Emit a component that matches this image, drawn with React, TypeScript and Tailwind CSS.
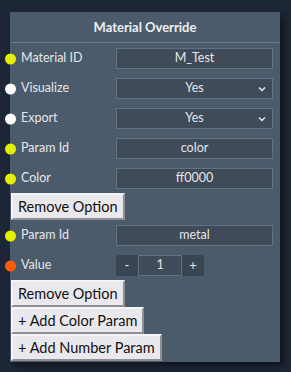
const font = { fontFamily: "Lato, 'Noto Sans', sans-serif" };

function Dot({ color }: { color: string }) {
  return <span className={`absolute left-[-5px] top-1/2 -translate-y-1/2 w-[11px] h-[11px] rounded-full ${color}`} />;
}

function Row({ dot, label, children }: { dot: string; label: string; children: React.ReactNode }) {
  return (
    <div className="relative flex items-center h-[21px] pl-[11px] pr-[7px]">
      <Dot color={dot} />
      <span className="text-[12.5px] text-[#e4e7ea] flex-1">{label}</span>
      {children}
    </div>
  );
}

function TextBox({ value }: { value: string }) {
  return (
    <div className="w-[157px] h-[21px] bg-[#3f4b59] border border-[#627283] flex items-center justify-center text-[12.5px] text-[#e4e7ea]">
      {value}
    </div>
  );
}

function SelectBox({ value }: { value: string }) {
  return (
    <div className="relative w-[157px] h-[21px] bg-[#3f4b59] border border-[#627283] flex items-center justify-center text-[12.5px] text-[#e4e7ea]">
      {value}
      <svg className="absolute right-[6px] top-[7px]" width="8" height="6" viewBox="0 0 8 6">
        <path d="M1 1.5 L4 4.5 L7 1.5" stroke="#e4e7ea" strokeWidth="1.5" fill="none" />
      </svg>
    </div>
  );
}

function Btn({ children }: { children: React.ReactNode }) {
  return (
    <div className="self-start ml-px h-[27px] px-[5px] flex items-center bg-[#e9e8ed] border-2 border-t-[#f4f4f6] border-l-[#f4f4f6] border-b-[#8f8f94] border-r-[#8f8f94] text-[14.5px] text-[#111]">
      {children}
    </div>
  );
}

export default function App() {
  return (
    <div className="w-[291px] h-[372px] bg-[#1d2637] pt-[12px] pl-[10px]" style={font}>
      <div className="w-[270px] h-[350px] bg-[#4c5b6b] shadow-[4px_4px_6px_rgba(0,0,0,0.45)] flex flex-col">
        <div className="h-[31px] pt-px flex items-center justify-center text-[13px] font-bold text-[#eef0f2] border-b border-[#6c7b8b] mx-px">
          Material Override
        </div>
        <div className="flex flex-col pt-[5px]">
          <div className="flex flex-col gap-[9px]">
            <Row dot="bg-[#e4f000]" label="Material ID"><TextBox value="M_Test" /></Row>
            <Row dot="bg-white" label="Visualize"><SelectBox value="Yes" /></Row>
            <Row dot="bg-white" label="Export"><SelectBox value="Yes" /></Row>
            <Row dot="bg-[#e4f000]" label="Param Id"><TextBox value="color" /></Row>
            <Row dot="bg-[#e4f000]" label="Color"><TextBox value="ff0000" /></Row>
          </div>
          <div className="mt-[4px] flex flex-col"><Btn>Remove Option</Btn></div>
          <div className="flex flex-col gap-[9px] mt-[5px]">
            <Row dot="bg-[#e4f000]" label="Param Id"><TextBox value="metal" /></Row>
            <Row dot="bg-[#ff5a0a]" label="Value">
              <div className="w-[157px] flex">
                <div className="w-[22px] h-[21px] bg-[#3a4553] rounded-l-[2px] flex items-center justify-center text-[13px] text-[#e4e7ea]">-</div>
                <div className="w-[44px] h-[21px] bg-[#3f4b59] border border-[#627283] flex items-center justify-center text-[12.5px] text-[#e4e7ea]">1</div>
                <div className="w-[22px] h-[21px] bg-[#3a4553] rounded-r-[2px] flex items-center justify-center text-[13px] text-[#e4e7ea]">+</div>
              </div>
            </Row>
          </div>
          <div className="mt-[4px] flex flex-col">
            <Btn>Remove Option</Btn>
            <Btn>+ Add Color Param</Btn>
            <Btn>+ Add Number Param</Btn>
          </div>
        </div>
      </div>
    </div>
  );
}
